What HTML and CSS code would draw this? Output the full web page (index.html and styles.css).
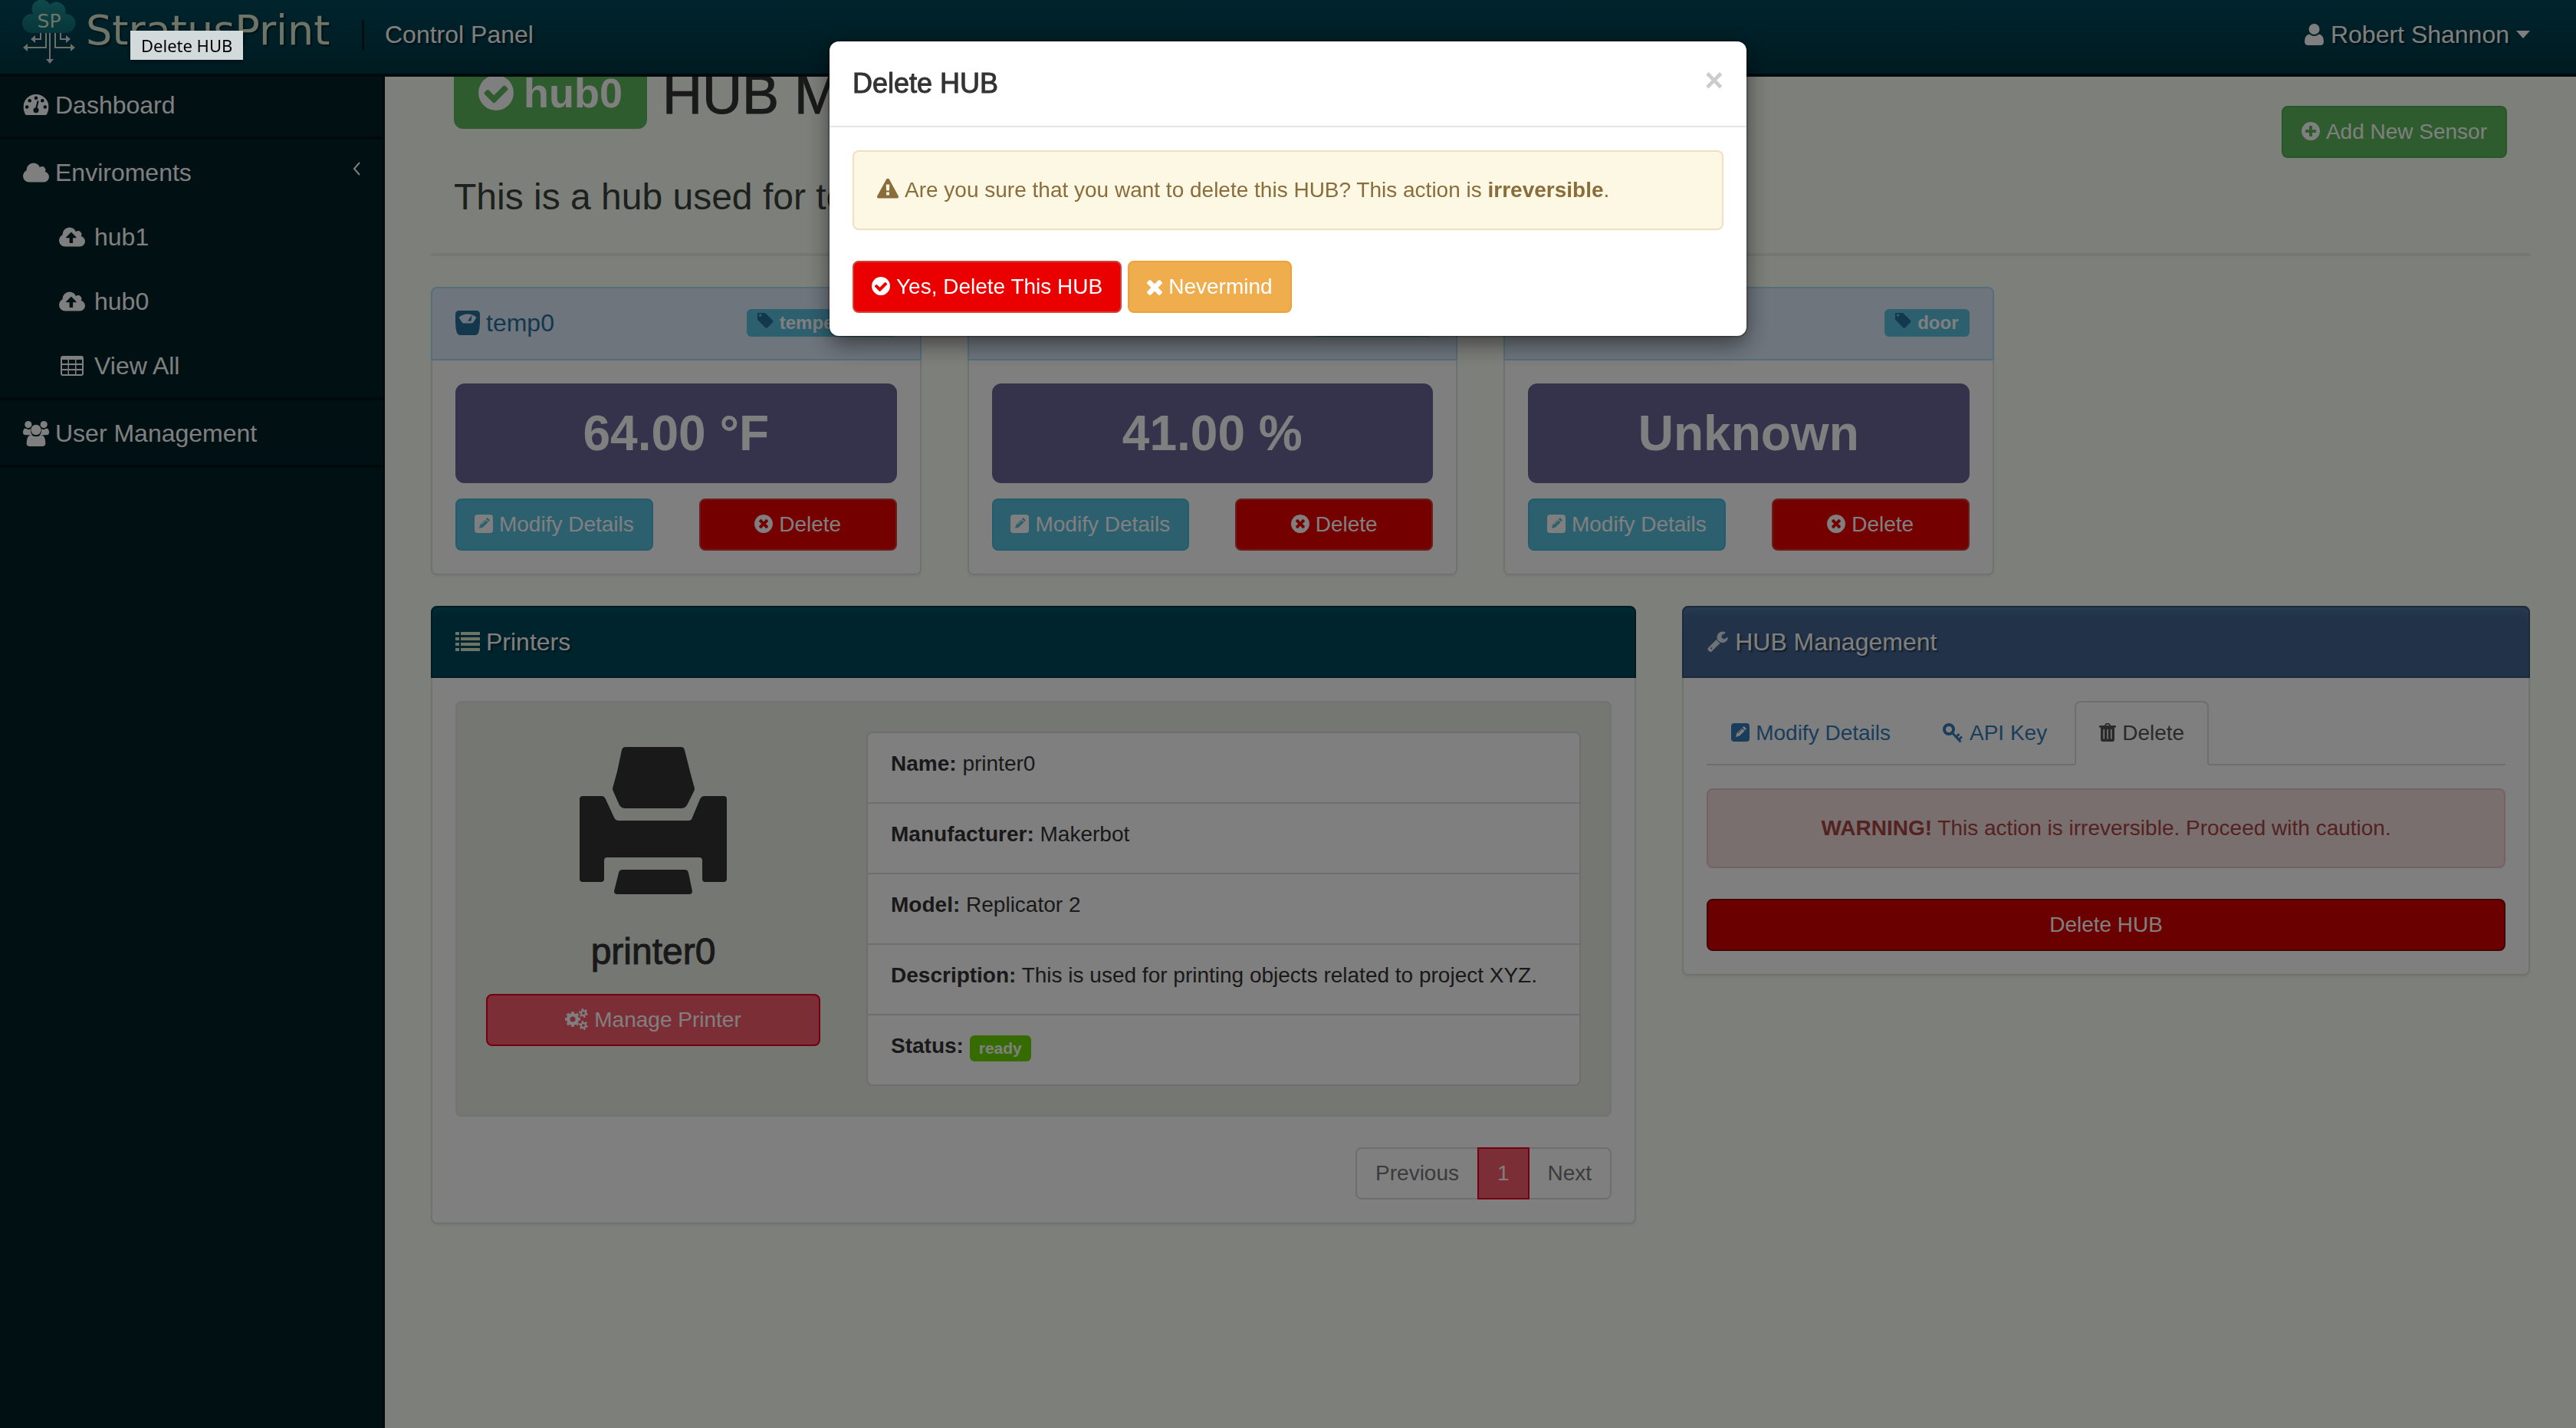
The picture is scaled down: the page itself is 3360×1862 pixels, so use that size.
FILE: index.html
```html
<!DOCTYPE html>
<html lang="en">
<head>
<meta charset="utf-8">
<meta name="viewport" content="width=device-width, initial-scale=1">
<title>StratusPrint Control Panel</title>
<link rel="stylesheet" href="styles.css">
</head>
<body>

<svg class="sprite" aria-hidden="true">
  <defs>
    <linearGradient id="cloud-fill" x1="0" y1="0" x2="0" y2="1">
      <stop offset="0" stop-color="#209298"/><stop offset="1" stop-color="#0c6c72"/>
    </linearGradient>
    <mask id="dash-holes">
      <rect width="32" height="27" fill="#fff"/>
      <g fill="#000"><circle cx="4.600" cy="16" r="2.200"/><circle cx="8" cy="8" r="2.200"/><circle cx="16" cy="4.700" r="2.200"/><circle cx="24" cy="8" r="2.200"/><circle cx="27.400" cy="16" r="2.200"/><circle cx="16" cy="20" r="3.400"/></g>
      <path d="M16 19l2.400-10" stroke="#000" stroke-width="2" stroke-linecap="round"/>
    </mask>
    <mask id="pencil-hole">
      <rect width="24" height="24" fill="#fff"/>
      <g transform="rotate(45 12 12)" fill="#000"><rect x="9.500" y="3" width="5" height="2.600" rx="1"/><path d="M9.500 6.600h5v9.400l-2.500 4.500-2.500-4.500z"/></g>
      <path d="M9 13l6-6" stroke="#fff" stroke-width="1"/>
    </mask>
  </defs>
  <symbol id="i-check-circle" viewBox="128 128 1536 1536"><path d="M1412 734q0-28-18-46l-91-90q-19-19-45-19t-45 19l-408 407-226-226q-19-19-45-19t-45 19l-91 90q-18 18-18 46 0 27 18 45l362 362q19 19 45 19 27 0 46-19l543-543q18-18 18-45zm252 162q0 209-103 385.500t-279.500 279.500-385.500 103-385.500-103-279.500-279.500-103-385.500 103-385.500 279.500-279.500 385.500-103 385.500 103 279.500 279.500 103 385.500z"/></symbol>
  <symbol id="i-plus-circle" viewBox="128 128 1536 1536"><path d="M1344 960v-128q0-26-19-45t-45-19h-256v-256q0-26-19-45t-45-19h-128q-26 0-45 19t-19 45v256h-256q-26 0-45 19t-19 45v128q0 26 19 45t45 19h256v256q0 26 19 45t45 19h128q26 0 45-19t19-45v-256h256q26 0 45-19t19-45zm320-64q0 209-103 385.500t-279.500 279.500-385.500 103-385.500-103-279.500-279.500-103-385.500 103-385.500 279.500-279.500 385.500-103 385.500 103 279.500 279.500 103 385.500z"/></symbol>
  <symbol id="i-times-circle" viewBox="128 128 1536 1536"><path d="M1277 1122q0-26-19-45l-181-181 181-181q19-19 19-45 0-27-19-46l-90-90q-19-19-46-19-26 0-45 19l-181 181-181-181q-19-19-45-19-27 0-46 19l-90 90q-19 19-19 46 0 26 19 45l181 181-181 181q-19 19-19 45 0 27 19 46l90 90q19 19 46 19 26 0 45-19l181-181 181 181q19 19 45 19 27 0 46-19l90-90q19-19 19-46zm387-226q0 209-103 385.500t-279.500 279.500-385.500 103-385.500-103-279.500-279.500-103-385.500 103-385.500 279.500-279.500 385.500-103 385.500 103 279.500 279.500 103 385.500z"/></symbol>
  <symbol id="i-times" viewBox="302 366 1188 1188"><path d="M1490 1322q0 40-28 68l-136 136q-28 28-68 28t-68-28l-294-294-294 294q-28 28-68 28t-68-28l-136-136q-28-28-28-68t28-68l294-294-294-294q-28-28-28-68t28-68l136-136q28-28 68-28t68 28l294 294 294-294q28-28 68-28t68 28l136 136q28 28 28 68t-28 68l-294 294 294 294q28 28 28 68z"/></symbol>
  <symbol id="i-cloud" viewBox="64 128 1920 1408"><path d="M1984 1152q0 159-112.500 271.500t-271.500 112.500h-1088q-185 0-316.500-131.500t-131.500-316.500q0-132 71-241.500t187-163.500q-2-28-2-43 0-212 150-362t362-150q158 0 286.500 88t187.500 230q70-62 166-62 106 0 181 75t75 181q0 75-41 138 129 30 213 134.500t84 239.500z"/></symbol>
  <symbol id="i-cloud-up" viewBox="64 128 1920 1408"><path d="M1344 864q0-14-9-23l-352-352q-9-9-23-9t-23 9l-351 351q-10 12-10 24 0 14 9 23t23 9h224v352q0 13 9.500 22.500t22.500 9.500h192q13 0 22.500-9.500t9.500-22.500v-352h224q13 0 22.500-9.500t9.500-22.500zm640 288q0 159-112.500 271.500t-271.500 112.500h-1088q-185 0-316.500-131.500t-131.500-316.500q0-132 71-241.500t187-163.500q-2-28-2-43 0-212 150-362t362-150q158 0 286.500 88t187.500 230q70-62 166-62 106 0 181 75t75 181q0 75-41 138 129 30 213 134.500t84 239.500z"/></symbol>
  <symbol id="i-dashboard" viewBox="0 0 32 27"><path mask="url(#dash-holes)" d="M0 16a16 16 0 0 1 32 0q0 5-2.400 9-.6 1-1.600 1H4q-1 0-1.600-1Q0 21 0 16z"/></symbol>
  <symbol id="i-table" viewBox="-2 -1 34 28"><path fill-rule="evenodd" d="M3 0h24a3 3 0 0 1 3 3v20a3 3 0 0 1-3 3H3a3 3 0 0 1-3-3V3a3 3 0 0 1 3-3zM2 5v5h7.500V5zM11 5v5h8V5zM20.500 5v5H28V5zM2 12v5h7.500v-5zM11 12v5h8v-5zM20.500 12v5H28v-5zM2 19v4a1 1 0 0 0 1 1h6.500v-5zM11 19v5h8v-5zM20.500 19v5H27a1 1 0 0 0 1-1v-4z"/></symbol>
  <symbol id="i-users" viewBox="0 0 34 33"><circle cx="6.800" cy="4.600" r="4.600"/><circle cx="27.200" cy="4.600" r="4.600"/><path d="M3 9.500q4 2.500 7 .8-.8 5 2.400 8H3.600Q0 18.300 0 15q0-5 3-5.500zM31 9.500q-4 2.500-7 .8.800 5-2.400 8h8.800q3.600 0 3.600-3.300 0-5-3-5.500z"/><circle cx="17" cy="11.500" r="6.700"/><path d="M10.600 18q6.400 4.500 12.800 0 6 .8 6 11 0 4-4.400 4H9q-4.400 0-4.400-4 0-10.200 6-11z"/></symbol>
  <symbol id="i-user" viewBox="0 0 25 28"><circle cx="12.500" cy="7" r="7"/><path d="M6 13.500q6.500 5 13 0 6 1.500 6 9.500 0 5-4.500 5h-16Q0 28 0 23q0-8 6-9.500z"/></symbol>
  <symbol id="i-chevron" viewBox="0 0 10 18"><path d="M9 1L2 9l7 8" fill="none" stroke="currentColor" stroke-width="2"/></symbol>
  <symbol id="i-scale" viewBox="0 0 32 32"><path fill-rule="evenodd" d="M5 0h22q5 0 5 5v10q0 8-2 14-1.500 3-4.500 3h-19q-3 0-4.500-3-2-6-2-14V5q0-5 5-5zM4.500 9l4 6q1 1.500 2.500 1.500h10q1.500 0 2.500-1.500l4-6Q23 4.500 16 4.500T4.500 9z"/><path d="M16 13.500L21.500 6 20.500 13.500z"/></symbol>
  <symbol id="i-tag" viewBox="190 250 1500 1400"><path d="M576 448q0-53-37.500-90.500t-90.500-37.500-90.500 37.500-37.500 90.500 37.500 90.500 90.500 37.500 90.500-37.500 37.500-90.500zm1067 576q0 53-37 90l-491 492q-39 37-91 37-53 0-90-37l-715-716q-38-37-64.500-101t-26.500-117v-416q0-52 38-90t90-38h416q53 0 117 26.500t102 64.500l715 714q37 39 37 91z"/></symbol>
  <symbol id="i-pencil" viewBox="0 0 24 24"><rect mask="url(#pencil-hole)" width="24" height="24" rx="4"/></symbol>
  <symbol id="i-list" viewBox="0 0 32 26"><path d="M0 0h5v4H0zM7 0h25v4H7zM0 7h5v4H0zM7 7h25v4H7zM0 14h5v4H0zM7 14h25v4H7zM0 21h5v4H0zM7 21h25v4H7z"/></symbol>
  <symbol id="i-wrench" viewBox="0 128 1792 1664"><path d="M448 1472q0-26-19-45t-45-19-45 19-19 45 19 45 45 19 45-19 19-45zm644-420l-682 682q-37 37-90 37-52 0-91-37l-106-108q-38-36-38-90 0-53 38-91l681-681q39 98 114.500 173.500t173.500 114.500zm634-435q0 39-23 106-47 134-164.500 217.500t-258.500 83.500q-185 0-316.500-131.500t-131.500-316.500 131.500-316.500 316.500-131.500q58 0 121.500 16.500t107.500 46.500q16 11 16 28t-16 28l-293 169v224l193 107q5-3 79-48.500t135.500-81 70.500-35.500q15 0 23.500 10t8.500 25z"/></symbol>
  <symbol id="i-key" viewBox="0 0 26 26"><g fill="none" stroke="currentColor"><circle cx="8" cy="8" r="6" stroke-width="4"/><path d="M12 12l11.500 12.500M17.500 18l4-4M21 21.500l4-4" stroke-width="3"/></g></symbol>
  <symbol id="i-trash" viewBox="0 0 22 24"><path fill-rule="evenodd" d="M7 3l1-2q.5-1 1.500-1h3Q13.500 0 14 1l1 2h6q1 0 1 1v1.500h-2V21q0 3-2.500 3h-13Q2 24 2 21V5.500H0V4q0-1 1-1zM8.800 3h4.400l-.7-1.300h-3zM5.500 8v12.500H7V8zM10.300 8v12.500h1.500V8zM15 8v12.500h1.500V8z"/></symbol>
  <symbol id="i-warning" viewBox="0 128 1792 1664"><path d="M1024 1375v-190q0-14-9.500-23.500t-22.500-9.500h-192q-13 0-22.500 9.500t-9.500 23.500v190q0 14 9.500 23.500t22.500 9.500h192q13 0 22.500-9.500t9.500-23.500zm-2-374l18-459q0-12-10-19-13-11-24-11h-220q-11 0-24 11-10 7-10 21l17 457q0 10 10 16.500t24 6.500h185q14 0 23.500-6.500t10.500-16.500zm-14-934l768 1408q35 63-2 126-17 29-46.500 46t-63.500 17h-1536q-34 0-63.500-17t-46.500-46q-37-63-2-126l768-1408q17-31 47-49t65-18 65 18 47 49z" transform="translate(0 100)"/></symbol>
  <symbol id="i-cogs" viewBox="0 0 30 28"><g fill="none" stroke="currentColor"><circle cx="10" cy="14" r="5.800" stroke-width="4.400"/><circle cx="10" cy="14" r="8.800" stroke-width="2.600" pathLength="16" stroke-dasharray="1 1" stroke-dashoffset="0.500"/><circle cx="24" cy="6" r="3" stroke-width="2.200"/><circle cx="24" cy="6" r="4.900" stroke-width="2" pathLength="12" stroke-dasharray="1 1"/><circle cx="24" cy="22" r="3" stroke-width="2.200"/><circle cx="24" cy="22" r="4.900" stroke-width="2" pathLength="12" stroke-dasharray="1 1"/></g></symbol>
  <symbol id="i-caret" viewBox="0 0 18 10"><path d="M0 0h18L9 10z"/></symbol>
  <symbol id="i-printer" viewBox="0 0 192 192"><path d="M60 0h72q4 0 5 4l7 28 6 22q0 2-1 4l-9 18q-3 4-7 4H59q-4 0-7-4l-8-18q-1-2-1-4l6-22 6-28q1-4 5-4zM4 64h25q3 0 5 4l11 24q2 4 6 4h91q4 0 5-4l10-24q2-4 6-4h25q4 0 4 4v104q0 4-4 4h-24q-4 0-4-4v-24q0-4-4-4H36q-4 0-4 4v24q0 4-4 4H4q-4 0-4-4V68q0-4 4-4zM56 160h81q4 0 5 4l5 24q0 4-4 4H49q-4 0-4-4l6-24q1-4 5-4z"/></symbol>
</svg>

<header class="navbar">
  <a class="brand" href="#">
    <svg class="brand-mark" viewBox="0 0 72 84" aria-hidden="true">
      <g fill="none" stroke-width="2">
        <path d="M37 42v38M25 42v9H16M51 42v9H60" stroke="#dcd8dc"/>
        <path d="M32 42v20H6M44 42v20H66" stroke="#d6e2c6"/>
      </g>
      <path fill="#dcd8dc" d="M32 77h10l-5 6zM18 46v10l-6-5zM58 46v10l6-5z"/>
      <path fill="#d6e2c6" d="M8 57v10l-6-5zM64 57v10l6-5z"/>
      <path fill="url(#cloud-fill)" d="M13 18h2A12 12 0 0 1 37 6a12 12 0 0 1 20 12h1a12.500 12.500 0 0 1 0 25H14a12.500 12.500 0 0 1-1-25z"/>
      <text x="36" y="36" text-anchor="middle" class="brand-initials">SP</text>
    </svg>
    <span class="brand-name">StratusPrint</span>
  </a>
  <a class="nav-title" href="#">Control Panel</a>
  <button class="user-menu" type="button">
    <svg class="icon user-icon"><use href="#i-user"/></svg>Robert Shannon<svg class="icon caret"><use href="#i-caret"/></svg>
  </button>
</header>

<div class="shell">
  <nav class="sidebar" aria-label="Main">
    <ul class="menu">
      <li class="menu-item"><a href="#"><svg class="icon i-lg"><use href="#i-dashboard"/></svg>Dashboard</a></li>
      <li class="menu-item">
        <a href="#"><svg class="icon i-lg"><use href="#i-cloud"/></svg>Enviroments<svg class="icon chevron"><use href="#i-chevron"/></svg></a>
        <ul class="submenu">
          <li><a href="#"><svg class="icon i-lg"><use href="#i-cloud-up"/></svg>hub1</a></li>
          <li><a href="#"><svg class="icon i-lg"><use href="#i-cloud-up"/></svg>hub0</a></li>
          <li><a href="#"><svg class="icon i-lg"><use href="#i-table"/></svg>View All</a></li>
        </ul>
      </li>
      <li class="menu-item"><a href="#"><svg class="icon i-users"><use href="#i-users"/></svg>User Management</a></li>
    </ul>
  </nav>

  <main class="content">
    <div class="page-header">
      <div class="page-heading">
        <h1><span class="hub-badge"><svg class="icon"><use href="#i-check-circle"/></svg>hub0</span>HUB Management</h1>
        <p class="lead">This is a hub used for testing.</p>
      </div>
      <button class="btn btn-success" type="button"><svg class="icon i-sm"><use href="#i-plus-circle"/></svg>Add New Sensor</button>
    </div>

    <section class="sensors">
      <article class="panel panel-info">
        <div class="panel-heading"><h3><svg class="icon scale"><use href="#i-scale"/></svg>temp0</h3><span class="type-tag"><svg class="icon"><use href="#i-tag"/></svg>temperature</span></div>
        <div class="panel-body">
          <div class="reading">64.00 °F</div>
          <div class="actions">
            <button class="btn btn-info" type="button"><svg class="icon i-sm"><use href="#i-pencil"/></svg>Modify Details</button>
            <button class="btn btn-danger" type="button"><svg class="icon i-sm"><use href="#i-times-circle"/></svg>Delete</button>
          </div>
        </div>
      </article>
      <article class="panel panel-info">
        <div class="panel-heading"><h3><svg class="icon scale"><use href="#i-scale"/></svg>hum0</h3><span class="type-tag"><svg class="icon"><use href="#i-tag"/></svg>humidity</span></div>
        <div class="panel-body">
          <div class="reading">41.00 %</div>
          <div class="actions">
            <button class="btn btn-info" type="button"><svg class="icon i-sm"><use href="#i-pencil"/></svg>Modify Details</button>
            <button class="btn btn-danger" type="button"><svg class="icon i-sm"><use href="#i-times-circle"/></svg>Delete</button>
          </div>
        </div>
      </article>
      <article class="panel panel-info">
        <div class="panel-heading"><h3><svg class="icon scale"><use href="#i-scale"/></svg>door0</h3><span class="type-tag"><svg class="icon"><use href="#i-tag"/></svg>door</span></div>
        <div class="panel-body">
          <div class="reading">Unknown</div>
          <div class="actions">
            <button class="btn btn-info" type="button"><svg class="icon i-sm"><use href="#i-pencil"/></svg>Modify Details</button>
            <button class="btn btn-danger" type="button"><svg class="icon i-sm"><use href="#i-times-circle"/></svg>Delete</button>
          </div>
        </div>
      </article>
    </section>

    <div class="columns">
      <section class="panel panel-printers">
        <div class="panel-heading"><h3><svg class="icon list-icon"><use href="#i-list"/></svg>Printers</h3></div>
        <div class="panel-body">
          <div class="well">
            <div class="printer">
              <svg class="icon printer-icon"><use href="#i-printer"/></svg>
              <h2>printer0</h2>
              <button class="btn btn-primary btn-block" type="button"><svg class="icon cogs"><use href="#i-cogs"/></svg>Manage Printer</button>
            </div>
            <ul class="details">
              <li><strong>Name:</strong> printer0</li>
              <li><strong>Manufacturer:</strong> Makerbot</li>
              <li><strong>Model:</strong> Replicator 2</li>
              <li><strong>Description:</strong> This is used for printing objects related to project XYZ.</li>
              <li><strong>Status:</strong> <span class="status">ready</span></li>
            </ul>
          </div>
          <nav class="pagination" aria-label="Printer pages">
            <a href="#">Previous</a><a class="current" href="#">1</a><a href="#">Next</a>
          </nav>
        </div>
      </section>

      <section class="panel panel-hub">
        <div class="panel-heading"><h3><svg class="icon wrench"><use href="#i-wrench"/></svg>HUB Management</h3></div>
        <div class="panel-body">
          <ul class="tabs">
            <li><a href="#"><svg class="icon i-sm"><use href="#i-pencil"/></svg>Modify Details</a></li>
            <li><a href="#"><svg class="icon key"><use href="#i-key"/></svg>API Key</a></li>
            <li><a class="active" href="#"><svg class="icon trash"><use href="#i-trash"/></svg>Delete</a></li>
          </ul>
          <div class="alert alert-danger"><strong>WARNING!</strong> This action is irreversible. Proceed with caution.</div>
          <button class="btn btn-danger pressed btn-block" type="button">Delete HUB</button>
        </div>
      </section>
    </div>
  </main>
</div>

<div class="backdrop">
  <div class="modal" role="dialog" aria-modal="true" aria-labelledby="modal-title">
    <div class="modal-header">
      <h4 id="modal-title">Delete HUB</h4>
      <button class="close" type="button" aria-label="Close">×</button>
    </div>
    <div class="modal-body">
      <div class="alert alert-warning"><svg class="icon warning"><use href="#i-warning"/></svg>Are you sure that you want to delete this HUB? This action is <strong>irreversible</strong>.</div>
      <div class="modal-actions">
        <button class="btn btn-danger" type="button"><svg class="icon i-sm"><use href="#i-check-circle"/></svg>Yes, Delete This HUB</button>
        <button class="btn btn-warning" type="button"><svg class="icon times"><use href="#i-times"/></svg>Nevermind</button>
      </div>
    </div>
  </div>
</div>
<div class="tooltip" role="tooltip">Delete HUB</div>
</body>
</html>
```
FILE: styles.css
```css
* { box-sizing: border-box; }

html, body { height: 100%; }

body {
  margin: 0;
  overflow: hidden;
  background: #fbfef7;
  color: #333;
  font: 28px/40px "Liberation Sans", Arial, sans-serif;
}

h1, h2, h3, h4, p, ul { margin: 0; padding: 0; font-weight: 400; }
ul { list-style: none; }
a { color: inherit; text-decoration: none; }
button { font: inherit; cursor: pointer; }

.sprite { position: absolute; width: 0; height: 0; }
.icon { display: inline-block; flex: none; fill: currentColor; }
.i-sm { width: 24px; height: 24px; vertical-align: -2px; margin-right: 8px; }
.i-lg { width: 34px; height: 28px; }
.i-users { width: 34px; height: 33px; }

/* Top bar */
.navbar {
  position: fixed;
  inset: 0 0 auto 0;
  z-index: 10;
  display: flex;
  height: 100px;
  border-bottom: 4px solid #001418;
  background: linear-gradient(#00485a, #003644);
  color: #fff;
  font-size: 32px;
  line-height: 44px;
  text-shadow: 2px 2px 2px rgba(0, 0, 0, .5);
}
.brand {
  display: flex;
  width: 472px;
  padding-left: 28px;
  gap: 12px;
}
.brand-mark { width: 72px; height: 84px; text-shadow: none; }
.brand-initials { font: 25px "DejaVu Sans", sans-serif; fill: #dce8cc; }
.brand-name {
  padding-top: 18px;
  color: #dce8cc;
  font: 54px/44px "DejaVu Sans", sans-serif;
}
.nav-title { padding: 23px 30px 0; position: relative; }
.nav-title::before {
  content: "";
  position: absolute;
  left: 0;
  top: 26px;
  width: 3px;
  height: 40px;
  background: #001f28;
}
.user-menu {
  display: flex;
  align-items: center;
  align-self: flex-start;
  gap: 9px;
  margin: 23px 60px 0 auto;
  padding: 0;
  border: 0;
  background: none;
  color: #fff;
  line-height: 44px;
  text-shadow: inherit;
}
.user-icon { width: 25px; height: 28px; }
.caret { width: 18px; height: 10px; }

/* Shell */
.shell { display: flex; min-height: 100%; }
.sidebar {
  flex: none;
  width: 502px;
  padding-top: 94px;
  border-right: 2px solid #111;
  background: #002027;
  color: #fff;
  font-size: 32px;
  line-height: 44px;
}
.menu-item { border-bottom: 4px solid #00141a; }
.menu a {
  display: flex;
  align-items: center;
  gap: 8px;
  padding: 21px 30px 19px;
}
.menu .submenu a { padding-left: 77px; gap: 12px; }
.chevron { width: 10px; height: 18px; margin-left: auto; margin-bottom: 10px; }

/* Page header */
.content { flex: 1; min-width: 0; padding: 83px 60px 60px; }
.page-header {
  display: flex;
  justify-content: space-between;
  align-items: flex-start;
  margin-bottom: 40px;
  padding: 0 30px 39px;
  border-bottom: 4px solid #ebeee6;
}
.page-header .btn { margin-top: 55px; }
h1 {
  display: flex;
  align-items: flex-start;
  gap: 20px;
  font-size: 72px;
  line-height: 80px;
  -webkit-text-stroke: 1px;
}
.hub-badge {
  display: flex;
  align-items: center;
  gap: 13px;
  padding: 11px 32px 20px;
  border-radius: 12px;
  background: #5cb85c;
  color: #fff;
  font-size: 54px;
  line-height: 54px;
  font-weight: 700;
  -webkit-text-stroke: 0;
}
.hub-badge .icon { width: 46px; height: 46px; }
.lead { margin-top: 55px; color: #3b423b; font-size: 48px; line-height: 68px; }

/* Buttons */
.btn {
  padding: 12px 24px;
  border: 2px solid;
  border-radius: 8px;
  color: #fff;
  line-height: 40px;
  white-space: nowrap;
}
.btn-block { width: 100%; }
.btn-success { background: #5cb85c; border-color: #4cae4c; }
.btn-info { background: #5bc0de; border-color: #46b8da; }
.btn-danger { background: #eb0000; border-color: #d43f3a; }
.btn-danger.pressed { background: #d60000; border-color: #8a0000; }
.btn-warning { background: #f0ad4e; border-color: #eea236; }
.btn-primary { background: #f75c6b; border-color: #e60020; }

/* Panels */
.panel { border-radius: 8px; box-shadow: 0 2px 2px rgba(0, 0, 0, .05); }
.panel-heading {
  display: flex;
  align-items: center;
  justify-content: space-between;
  padding: 23px 30px;
  border: 2px solid;
  border-radius: 8px 8px 0 0;
}
.panel-heading h3 { display: flex; align-items: center; gap: 8px; font-size: 32px; line-height: 44px; }
.panel-body {
  padding: 30px;
  border: 2px solid #dfe6da;
  border-top: 0;
  border-radius: 0 0 8px 8px;
  background: #fff;
}

.sensors { display: grid; grid-template-columns: repeat(4, 1fr); gap: 60px; margin-bottom: 40px; }
.panel-info .panel-heading {
  padding-bottom: 25px;
  border-color: #aadcfa;
  background: #dcebfa;
  color: #26709c;
}
.scale { width: 32px; height: 32px; }
.type-tag {
  display: flex;
  align-items: center;
  gap: 8px;
  height: 36px;
  padding: 0 14px;
  border-radius: 6px;
  background: #5bc0de;
  color: #fff;
  font-size: 24px;
  line-height: 36px;
  font-weight: 700;
}
.type-tag .icon { width: 21px; height: 20px; margin-bottom: 6px; color: #26709c; }
.reading {
  margin-bottom: 20px;
  padding: 33px 10px;
  border-radius: 12px;
  background: #6a6499;
  color: #fff;
  font-size: 64px;
  line-height: 64px;
  font-weight: 700;
  text-align: center;
}
.actions { display: grid; grid-template-columns: 1fr 1fr; gap: 60px; }
.actions .btn { padding-inline: 0; }

.columns { display: grid; grid-template-columns: repeat(12, 1fr); gap: 60px; align-items: start; }
.panel-printers { grid-column: span 7; }
.panel-hub { grid-column: span 5; }
.panel-printers .panel-heading,
.panel-hub .panel-heading { color: #fff; text-shadow: 2px 2px 2px rgba(0, 0, 0, .5); }
.panel-printers .panel-heading { border-color: #003444; background: #00485a; box-shadow: inset 0 10px 12px -6px #005a70; }
.panel-hub .panel-heading { border-color: #365272; background: #446692; box-shadow: inset 0 10px 12px -6px #4e7aa8; }
.list-icon { width: 32px; height: 26px; color: #d9eacb; }
.wrench { width: 29px; height: 28px; color: #dde6ee; }

.well {
  display: grid;
  grid-template-columns: repeat(12, 1fr);
  gap: 0 60px;
  margin-bottom: 40px;
  padding: 38px;
  border: 2px solid #e4e7e0;
  border-radius: 8px;
  background: #ebeee7;
}
.printer { grid-column: span 4; padding-top: 20px; text-align: center; }
.printer-icon { display: block; width: 192px; height: 192px; margin: 0 auto; }
.printer h2 { margin: 48px 0 28px; font-size: 48px; line-height: 54px; -webkit-text-stroke: 1px; }
.cogs { width: 30px; height: 28px; vertical-align: -4px; margin-right: 8px; }
.details {
  grid-column: span 8;
  border: 2px solid #ddd;
  border-radius: 8px;
  background: #fff;
}
.details li { padding: 20px 30px 30px; border-bottom: 2px solid #ddd; }
.details li:last-child { height: 90px; border-bottom: 0; }
.status {
  display: inline-block;
  padding: 4px 12px;
  border-radius: 6px;
  background: #6cd602;
  color: #fff;
  font-size: 21px;
  line-height: 26px;
  font-weight: 700;
  vertical-align: -1px;
}

.pagination { display: flex; justify-content: flex-end; color: #777; }
.pagination a { padding: 12px 24px; border: 2px solid #ddd; border-left-width: 0; }
.pagination a:first-child { border-left-width: 2px; border-radius: 8px 0 0 8px; }
.pagination a:last-child { border-radius: 0 8px 8px 0; }
.pagination .current { border: 2px solid #e60020; background: #f75c6b; color: #fff; margin-left: -2px; }

.tabs { display: flex; gap: 4px; margin-bottom: 30px; box-shadow: inset 0 -2px #ddd; color: #337ab7; }
.tabs a { display: block; padding: 20px 30px; border: 2px solid transparent; border-radius: 8px 8px 0 0; }
.tabs .active { border-color: #ddd #ddd #fff; background: #fff; color: #555; }
.key { width: 26px; height: 26px; vertical-align: -4px; margin-right: 9px; }
.trash { width: 22px; height: 24px; vertical-align: -2px; margin-right: 8px; }

.alert { margin-bottom: 40px; padding: 30px; border: 2px solid; border-radius: 8px; }
.alert-danger { border-color: #ecc4c8; background: #f2dede; color: #a94442; text-align: center; }
.alert-warning { border-color: #f0dfc0; background: #fcf8e3; color: #8a6d3b; }
.warning { width: 28px; height: 26px; vertical-align: -2px; margin-right: 8px; }

/* Dialog */
.backdrop {
  position: fixed;
  inset: 0;
  z-index: 20;
  padding-top: 54px;
  background: rgba(0, 0, 0, .5);
}
.modal {
  max-width: 1196px;
  margin: 0 auto;
  border-radius: 12px;
  background: #fff;
  box-shadow: 0 0 0 2px rgba(0, 0, 0, .2), 0 10px 30px rgba(0, 0, 0, .5);
}
.modal-header {
  display: flex;
  justify-content: space-between;
  align-items: flex-start;
  padding: 30px;
  border-bottom: 2px solid #e5e5e5;
}
.modal-header h4 { font-size: 36px; line-height: 50px; -webkit-text-stroke: 1px; }
.close {
  padding: 0;
  border: 0;
  background: none;
  color: #ccc;
  font-size: 42px;
  line-height: 42px;
  font-weight: 700;
}
.modal-body { padding: 30px; }
.modal-actions { display: flex; gap: 8px; }
.modal-actions .btn { padding-inline: 23px; }
.times { width: 20px; height: 20px; margin-right: 8px; vertical-align: -2px; }

.tooltip {
  position: fixed;
  left: 170px;
  top: 40px;
  z-index: 30;
  padding: 4px 14px;
  background: #d2dadb;
  color: #000;
  box-shadow: 0 2px 6px rgba(0, 0, 0, .4);
  font: 22px/30px "Noto Sans", sans-serif;
}
```
